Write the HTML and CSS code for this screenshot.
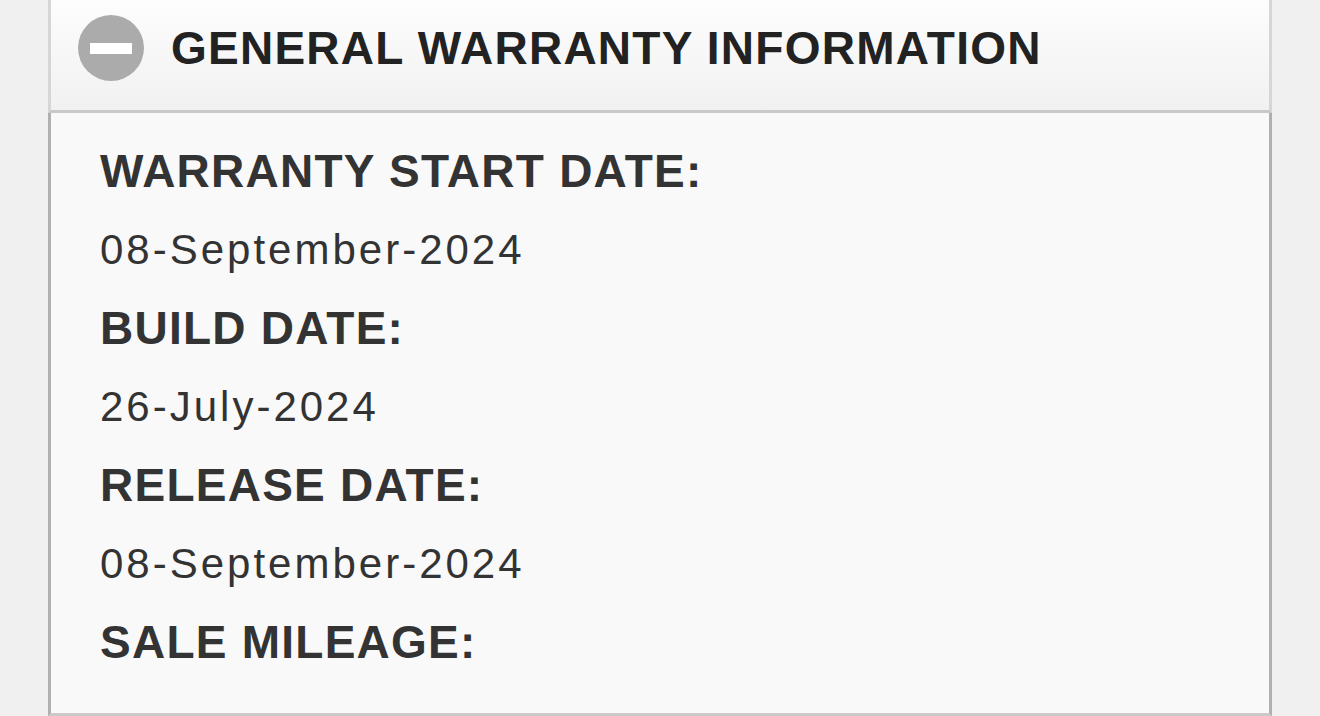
FILE: index.html
```html
<!DOCTYPE html>
<html>
  <head>
    <meta charset="utf-8">
    <meta name="viewport" content="width=device-width, initial-scale=1.0">
    <title>Warranty</title>
    <link rel="stylesheet" href="styles.css">
  </head>
  <body>
    <div class="panel">
      <div class="panel-head">
        <span class="toggle"><span class="toggle-bar"></span></span>
        <h2 class="panel-title">GENERAL WARRANTY INFORMATION</h2>
      </div>
      <dl class="panel-body">
        <dt>WARRANTY START DATE:</dt>
        <dd>08-September-2024</dd>
        <dt>BUILD DATE:</dt>
        <dd>26-July-2024</dd>
        <dt>RELEASE DATE:</dt>
        <dd>08-September-2024</dd>
        <dt>SALE MILEAGE:</dt>
        <dd></dd>
      </dl>
    </div>
  </body>
</html>
```

FILE: styles.css
```css
html, body {
  margin: 0;
  padding: 0;
  background-color: #f0f0f0;
  font-family: "Liberation Sans", Arial, Helvetica, sans-serif;
}
.panel {
  margin: 0 48px;
}
.panel-head {
  display: flex;
  align-items: center;
  height: 110px;
  padding-left: 27px;
  border: 3px solid #d6d6d6;
  border-top: 0;
  border-bottom-color: #c9c9c9;
  background: linear-gradient(to bottom, #fdfdfd, #f1f1f1);
}
.toggle {
  display: flex;
  align-items: center;
  justify-content: center;
  width: 66px;
  height: 66px;
  margin-top: -14px;
  border-radius: 50%;
  background-color: #ababab;
}
.toggle-bar {
  width: 42px;
  height: 11px;
  background-color: #fff;
}
.panel-title {
  margin: -14px 0 0 27px;
  font-size: 46px;
  font-weight: bold;
  letter-spacing: 1.25px;
  color: #222;
}
.panel-body {
  margin: 0;
  height: 581px;
  padding: 19px 0 0 49px;
  border: 3px solid #b0b0b0;
  border-top: 0;
  border-bottom-color: #cacaca;
  background-color: #f9f9f9;
  color: #333;
}
.panel-body dt {
  font-size: 46px;
  font-weight: bold;
  letter-spacing: 1.25px;
  line-height: 78.5px;
}
.panel-body dd {
  margin: 0;
  font-size: 42px;
  letter-spacing: 3px;
  line-height: 78.5px;
}
.panel-body dd:empty {
  display: none;
}
```
